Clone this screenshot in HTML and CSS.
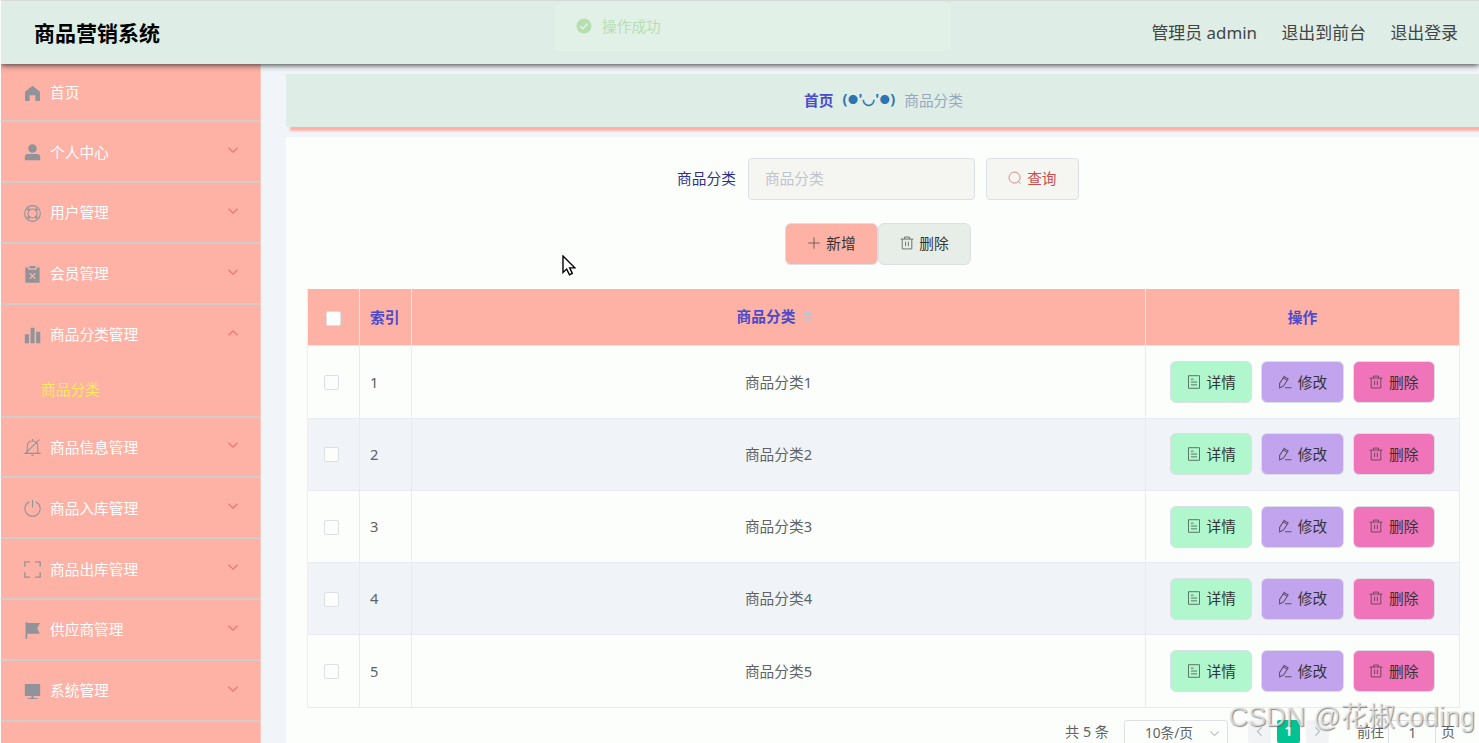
FILE: index.html
```
<!DOCTYPE html>
<html lang="zh-CN">
<head>
    <meta charset="UTF-8">
    <meta name="viewport" content="width=device-width, initial-scale=1.0">
    <title>商品营销系统</title>
    <link rel="stylesheet" href="styles.css">
</head>
<body>
    <svg class="sprite">
        <symbol id="i-home" viewBox="0 0 16 16"><path d="M8 .8 15 6.3V15H10.7V9.6H5.3V15H1V6.3z" fill="currentColor"/></symbol>
        <symbol id="i-user" viewBox="0 0 16 16"><circle cx="8" cy="4.3" r="4" fill="currentColor"/><path d="M.8 15.2V12.500q0-3 3-3h8.400q3 0 3 3v2.700z" fill="currentColor"/></symbol>
        <symbol id="i-help" viewBox="0 0 16 16"><g fill="none" stroke="currentColor"><circle cx="8" cy="8" r="7.400"/><circle cx="8" cy="8" r="4.300"/><path d="M2.600 3.900 5.300 5.600M3.900 2.600 5.600 5.300M13.400 3.900 10.700 5.600M12.100 2.600 10.400 5.300M2.600 12.100 5.300 10.400M3.900 13.400 5.600 10.700M13.400 12.100 10.700 10.400M12.100 13.400 10.400 10.700"/></g></symbol>
        <symbol id="i-clip" viewBox="0 0 16 16"><path d="M1.300 1.500H4V3.500H12V1.500H14.700V15.800H1.300z" fill="currentColor"/><path d="M5.300 0h5.400v2.200H5.300z" fill="currentColor"/><path d="m5.400 6.800 5.200 5.200m0-5.200-5.200 5.200" stroke="#feb1a5" stroke-width="1.100"/></symbol>
        <symbol id="i-bars" viewBox="0 0 16 16"><path d="M.8 6.800h3.900V15.300H.8zM6.200.8h3.700V15.300H6.200zM11.400 4.500h3.900V15.300h-3.900z" fill="currentColor"/></symbol>
        <symbol id="i-bell" viewBox="0 0 16 16"><path d="M8 0v1.700M3 13V7.500C3 3.900 5 1.900 8 1.900s5 2 5 5.600V13M.3 13.500h15.400M7 15.400h2M1 13.800 14.500.6" fill="none" stroke="currentColor"/></symbol>
        <symbol id="i-power" viewBox="0 0 16 16"><path d="M5 1.600a7.200 7.200 0 1 0 6 0M8 0v7" fill="none" stroke="currentColor"/></symbol>
        <symbol id="i-full" viewBox="0 0 16 16"><path d="M.8 5.500V.8H5.500M10.500.8h4.700V5.500M15.200 10.500v4.700H10.500M5.500 15.200H.8V10.500" fill="none" stroke="currentColor" stroke-width="1.200"/></symbol>
        <symbol id="i-flag" viewBox="0 0 16 16"><path d="M1.500 0h1.500V1H15l-2.600 5L15 11H3v5H1.500z" fill="currentColor"/></symbol>
        <symbol id="i-monitor" viewBox="0 0 16 16"><path d="M.8 1h14.400v11.200H.8zM7 12.200h2v1.800h3.500v1h-9v-1H7z" fill="currentColor"/></symbol>
        <symbol id="i-down" viewBox="0 0 16 16"><path d="m2 5 6 6 6-6" fill="none" stroke="currentColor" stroke-width="1.600"/></symbol>
        <symbol id="i-search" viewBox="0 0 16 16"><circle cx="7.500" cy="7.500" r="6.300" fill="none" stroke="currentColor"/><path d="m12 12 2.300 2.500" stroke="currentColor"/></symbol>
        <symbol id="i-plus" viewBox="0 0 16 16"><path d="M8 1.500v13M1.500 8h13" stroke="currentColor"/></symbol>
        <symbol id="i-trash" viewBox="0 0 16 16"><path d="M.8 3.500h14.400M5.200 3.300V1.200h5.600v2.100M2.500 3.500v11.300h11V3.500M6.400 6.500v5M9.600 6.500v5" fill="none" stroke="currentColor"/></symbol>
        <symbol id="i-doc" viewBox="0 0 16 16"><path d="M1.700.8h12.600v14.400H1.700zM4.500 4.800h3M4.500 8h7M4.500 11.300h7" fill="none" stroke="currentColor"/></symbol>
        <symbol id="i-edit" viewBox="0 0 16 16"><path d="m1.800 9.700 5.200-8 4.600 2.800-5.200 8-4.500 2.200zM6 3.300l4.600 2.800M8 14.600h7.500" fill="none" stroke="currentColor" stroke-width="1.150"/></symbol>
        <symbol id="i-ok" viewBox="0 0 16 16"><circle cx="8" cy="8" r="7.500" fill="currentColor"/><path d="m4.500 8.200 2.500 2.400 4.600-4.800" fill="none" stroke="#e2f1e7" stroke-width="1.500"/></symbol>
    </svg>

    <div class="header">
        <div class="title">商品营销系统</div>
        <div class="header-links">
            <span>管理员 admin</span>
            <span>退出到前台</span>
            <span>退出登录</span>
        </div>
    </div>

    <div class="message"><svg><use href="#i-ok"/></svg>操作成功</div>

    <div class="container">
        <div class="sidebar">
            <div class="menu-item first"><svg class="icon"><use href="#i-home"/></svg>首页</div>
            <div class="menu-item"><svg class="icon"><use href="#i-user"/></svg>个人中心<svg class="arrow"><use href="#i-down"/></svg></div>
            <div class="menu-item"><svg class="icon"><use href="#i-help"/></svg>用户管理<svg class="arrow"><use href="#i-down"/></svg></div>
            <div class="menu-item"><svg class="icon"><use href="#i-clip"/></svg>会员管理<svg class="arrow"><use href="#i-down"/></svg></div>
            <div class="menu-item open"><svg class="icon"><use href="#i-bars"/></svg>商品分类管理<svg class="arrow up"><use href="#i-down"/></svg></div>
            <div class="submenu">商品分类</div>
            <div class="menu-item"><svg class="icon"><use href="#i-bell"/></svg>商品信息管理<svg class="arrow"><use href="#i-down"/></svg></div>
            <div class="menu-item"><svg class="icon"><use href="#i-power"/></svg>商品入库管理<svg class="arrow"><use href="#i-down"/></svg></div>
            <div class="menu-item"><svg class="icon"><use href="#i-full"/></svg>商品出库管理<svg class="arrow"><use href="#i-down"/></svg></div>
            <div class="menu-item"><svg class="icon"><use href="#i-flag"/></svg>供应商管理<svg class="arrow"><use href="#i-down"/></svg></div>
            <div class="menu-item"><svg class="icon"><use href="#i-monitor"/></svg>系统管理<svg class="arrow"><use href="#i-down"/></svg></div>
        </div>

        <div class="main">
            <div class="breadcrumb">
                <b>首页</b>
                <span class="face">(<i>●</i>'◡'<i>●</i>)</span>
                <span class="current">商品分类</span>
            </div>

            <div class="content">
                <div class="search-row">
                    <label for="category">商品分类</label>
                    <input type="text" id="category" placeholder="商品分类">
                    <button class="btn search"><svg><use href="#i-search"/></svg>查询</button>
                </div>
                <div class="action-row">
                    <button class="btn add"><svg><use href="#i-plus"/></svg>新增</button>
                    <button class="btn remove"><svg><use href="#i-trash"/></svg>删除</button>
                </div>

                <table>
                    <thead>
                        <tr>
                            <th class="col-check"><span class="checkbox"></span></th>
                            <th class="col-index">索引</th>
                            <th><div class="sortable">商品分类<span class="sort"></span></div></th>
                            <th class="col-action">操作</th>
                        </tr>
                    </thead>
                    <tbody>
                        <tr>
                            <td class="col-check"><span class="checkbox"></span></td>
                            <td class="col-index">1</td>
                            <td>商品分类1</td>
                            <td><div class="ops">
                                <button class="btn detail"><svg><use href="#i-doc"/></svg>详情</button>
                                <button class="btn edit"><svg><use href="#i-edit"/></svg>修改</button>
                                <button class="btn delete"><svg><use href="#i-trash"/></svg>删除</button>
                            </div></td>
                        </tr>
                        <tr>
                            <td class="col-check"><span class="checkbox"></span></td>
                            <td class="col-index">2</td>
                            <td>商品分类2</td>
                            <td><div class="ops">
                                <button class="btn detail"><svg><use href="#i-doc"/></svg>详情</button>
                                <button class="btn edit"><svg><use href="#i-edit"/></svg>修改</button>
                                <button class="btn delete"><svg><use href="#i-trash"/></svg>删除</button>
                            </div></td>
                        </tr>
                        <tr>
                            <td class="col-check"><span class="checkbox"></span></td>
                            <td class="col-index">3</td>
                            <td>商品分类3</td>
                            <td><div class="ops">
                                <button class="btn detail"><svg><use href="#i-doc"/></svg>详情</button>
                                <button class="btn edit"><svg><use href="#i-edit"/></svg>修改</button>
                                <button class="btn delete"><svg><use href="#i-trash"/></svg>删除</button>
                            </div></td>
                        </tr>
                        <tr>
                            <td class="col-check"><span class="checkbox"></span></td>
                            <td class="col-index">4</td>
                            <td>商品分类4</td>
                            <td><div class="ops">
                                <button class="btn detail"><svg><use href="#i-doc"/></svg>详情</button>
                                <button class="btn edit"><svg><use href="#i-edit"/></svg>修改</button>
                                <button class="btn delete"><svg><use href="#i-trash"/></svg>删除</button>
                            </div></td>
                        </tr>
                        <tr>
                            <td class="col-check"><span class="checkbox"></span></td>
                            <td class="col-index">5</td>
                            <td>商品分类5</td>
                            <td><div class="ops">
                                <button class="btn detail"><svg><use href="#i-doc"/></svg>详情</button>
                                <button class="btn edit"><svg><use href="#i-edit"/></svg>修改</button>
                                <button class="btn delete"><svg><use href="#i-trash"/></svg>删除</button>
                            </div></td>
                        </tr>
                    </tbody>
                </table>

                <div class="pagination">
                    <span class="total">共 5 条</span>
                    <span class="page-size">10条/页<svg><use href="#i-down"/></svg></span>
                    <span class="page prev"><svg><use href="#i-down"/></svg></span>
                    <span class="page active">1</span>
                    <span class="page next"><svg><use href="#i-down"/></svg></span>
                    <span class="jump">前往</span>
                    <span class="page-input">1</span>
                    <span>页</span>
                </div>
            </div>
        </div>
    </div>

    <svg class="cursor" viewBox="0 0 14 21"><path d="M1 1v16.500l3.700-3.400 2.800 5.700 2.800-1.300-2.600-5.600H13z" fill="#fff" stroke="#000" stroke-width="1.400"/></svg>
    <div class="watermark">CSDN @花椒coding</div>
</body>
</html>
```

FILE: styles.css
```
* {
    box-sizing: border-box;
}

body {
    margin: 0;
    height: 743px;
    overflow: hidden;
    background: #f1f5f9;
    font-family: "Noto Sans", "Noto Sans CJK SC", sans-serif;
    font-size: 14.7px;
    line-height: 20px;
    color: #606266;
    border-left: 1px solid #fafafa;
}

.sprite {
    display: none;
}

svg {
    flex: none;
}

.header {
    position: relative;
    z-index: 2;
    height: 64px;
    padding: 0 21px 0 33px;
    display: flex;
    justify-content: space-between;
    align-items: center;
    background: #deeee6;
    border-top: 1px solid #d8dad8;
    box-shadow: 0 1px 6px #333;
}

.title {
    font-size: 21px;
    font-weight: bold;
    color: #000;
}

.header-links {
    display: flex;
    gap: 24.5px;
    font-size: 16.9px;
    color: #444;
}

.message {
    position: absolute;
    z-index: 3;
    left: 555px;
    top: 3px;
    width: 396px;
    height: 48px;
    padding: 0 0 2px 21px;
    display: flex;
    align-items: center;
    gap: 10px;
    background: #e2f1e7;
    border-radius: 4px;
    color: #b6dfb0;
}

.message svg {
    width: 16px;
    height: 16px;
}

.container {
    display: flex;
    height: 679px;
}

.sidebar {
    flex: none;
    width: 260px;
    background: #feb1a5;
    border-right: 1px solid #fbc8c0;
}

.menu-item {
    height: 60.8px;
    padding: 0 20px 0 23px;
    display: flex;
    align-items: center;
    border-bottom: 2px solid #d3cbc8;
    color: #fff;
}

.menu-item.first {
    height: 58.2px;
}

.menu-item.open {
    border-bottom: none;
    padding-bottom: 1px;
}

.icon {
    width: 17px;
    height: 17px;
    margin: 2px 9px 0 0;
    color: #909399;
}

.arrow {
    width: 12px;
    height: 12px;
    margin: 0 1px 3px auto;
    color: #ef756b;
}

.arrow.up {
    transform: rotate(180deg);
}

.submenu {
    height: 52.2px;
    padding: 0 0 3px 40px;
    display: flex;
    align-items: center;
    border-bottom: 2px solid #d3cbc8;
    color: #f4ed55;
}

.main {
    flex: 1;
    min-width: 0;
    padding: 10px 0 0 25px;
}

.breadcrumb {
    height: 53px;
    display: flex;
    justify-content: center;
    align-items: center;
    gap: 9px;
    padding: 0 0 2px 2px;
    background: #deeee6;
    box-shadow: 4px 4px 2px #feb1a5;
}

.breadcrumb b {
    color: #4b4bcb;
}

.face {
    display: flex;
    font-weight: bold;
    color: #2e74b0;
}

.face i {
    width: 11px;
    font-size: 10px;
    line-height: 24px;
    font-style: normal;
    text-align: center;
}

.current {
    color: #97a8be;
}

.content {
    height: 606px;
    margin-top: 10px;
    padding: 21px 19px 0 21px;
    background: #fcfefc;
}

.search-row, .action-row {
    display: flex;
    justify-content: center;
    align-items: center;
    height: 42px;
    padding-right: 11px;
}

.search-row label {
    margin: 0 12px 2px 0;
    color: #303088;
}

.search-row input {
    width: 227px;
    height: 42px;
    margin-right: 11px;
    padding: 0 16px 2px;
    border: 1px solid #dcdfe6;
    border-radius: 4px;
    background: #f5f5f2;
    font: inherit;
}

.search-row input::placeholder {
    color: #c0c4cc;
}

.action-row {
    margin: 23px 0 24px;
}

.btn {
    width: 93px;
    height: 42px;
    padding: 0 0 2px;
    display: flex;
    justify-content: center;
    align-items: center;
    gap: 5px;
    border: 1px solid #dcdfe6;
    border-radius: 6px;
    font: inherit;
    color: #333;
    white-space: nowrap;
}

.btn svg {
    width: 14px;
    height: 14px;
    opacity: 0.75;
}

.btn.search {
    border-radius: 4px;
    background: #f5f5f2;
    color: #c9504f;
}

.btn.add {
    background: #feb1a5;
}

.btn.remove {
    background: #e7eee8;
}

table {
    width: 1153px;
    table-layout: fixed;
    border-collapse: separate;
    border-spacing: 0;
    border-left: 1px solid #ebeef5;
}

th, td {
    padding: 0 0 1px;
    text-align: center;
    border-right: 1px solid #e8ebf3;
    border-bottom: 1px solid #e8ebf3;
}

th {
    height: 57.4px;
    background: #feb1a5;
    color: #4b4bcb;
}

td {
    height: 72.25px;
}

td:last-child {
    padding: 0;
}

tbody tr:nth-child(even) {
    background: #f0f4f8;
}

.col-check {
    width: 52px;
}

th.col-check {
    padding-bottom: 2px;
}

td.col-check {
    padding: 0 4px 3px 0;
}

.col-index {
    width: 52px;
    padding-left: 10px;
    text-align: left;
}

.col-action {
    width: 314px;
}

.checkbox {
    display: inline-block;
    width: 15px;
    height: 15px;
    border: 1px solid #dcdfe6;
    border-radius: 2px;
    background: #fcfefc;
    vertical-align: middle;
}

.sortable {
    display: flex;
    justify-content: center;
    align-items: center;
    gap: 8px;
    padding: 0 7px 1px 0;
}

/* up and down triangles of the sort handle */
.sort::before, .sort::after {
    content: "";
    display: block;
    border: 5px solid transparent;
}

.sort::before {
    border-top: none;
    border-bottom-color: #c0c4cc;
    margin-bottom: 2px;
}

.sort::after {
    border-bottom: none;
    border-top-color: #c0c4cc;
}

.ops {
    display: flex;
    justify-content: center;
    gap: 9px;
}

.ops .btn {
    width: 82.3px;
    gap: 6px;
    padding-bottom: 1px;
}

.detail {
    background: #b1f7cd;
}

.edit {
    background: #c2a3ed;
}

.delete {
    background: #ef74b9;
}

.pagination {
    display: flex;
    justify-content: flex-end;
    margin-top: 12px;
    padding-right: 5px;
    height: 24px;
    line-height: 24px;
    font-size: 13.7px;
}

.total {
    font-size: 14.2px;
}

.page-size {
    display: flex;
    align-items: center;
    justify-content: space-between;
    width: 104px;
    height: 29px;
    margin: 0 20px 0 15px;
    padding: 0 7px 2px 20px;
    border: 1px solid #dcdfe6;
    border-radius: 3px;
}

.pagination svg {
    width: 11px;
    height: 11px;
    color: #b4b8bf;
}

.page {
    display: flex;
    align-items: center;
    justify-content: center;
    width: 23px;
    height: 23px;
    margin-right: 6px;
    border-radius: 2px;
    background: #f2f3f5;
}

.page.active {
    background: #00c292;
    color: #fff;
    font-weight: bold;
}

.page.prev svg {
    transform: rotate(90deg);
}

.page.next svg {
    transform: rotate(-90deg);
}

.jump {
    margin-left: 22px;
}

.page-input {
    width: 48px;
    height: 29px;
    margin: 0 5px 0 4px;
    border: 1px solid #dcdfe6;
    border-radius: 3px;
    text-align: center;
}

.cursor {
    position: absolute;
    left: 562px;
    top: 255px;
    width: 14px;
    height: 21px;
}

.watermark {
    position: absolute;
    z-index: 4;
    right: 4px;
    bottom: 10px;
    font-family: "Liberation Sans", "Noto Sans CJK SC", sans-serif;
    font-size: 27.2px;
    line-height: 32px;
    color: rgba(235, 235, 235, 0.75);
    text-shadow: 1px 1px 1px rgba(90, 90, 90, 0.7);
    white-space: nowrap;
}
```
